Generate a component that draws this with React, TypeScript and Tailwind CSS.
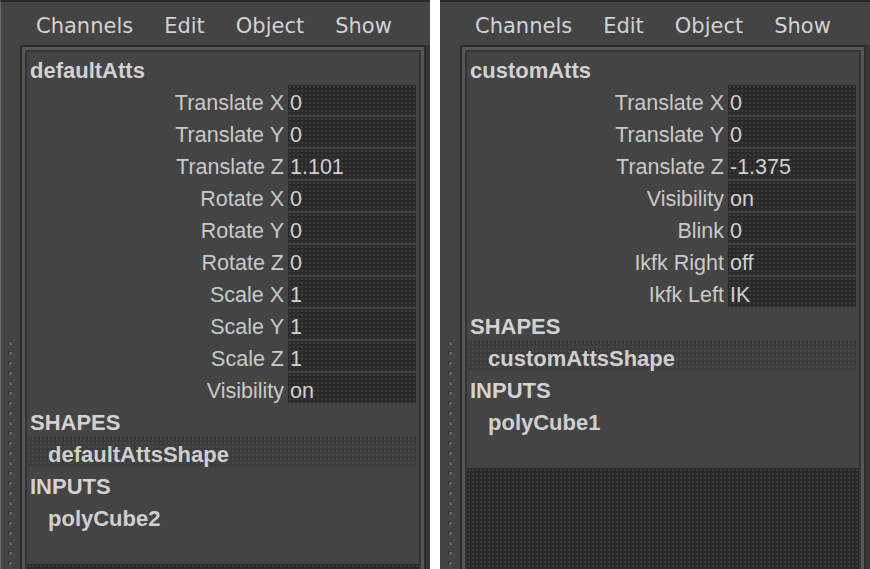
import React from 'react';

const sans = { fontFamily: '"Liberation Sans", Arial, sans-serif' };
const menuFont = { fontFamily: '"DejaVu Sans", "Liberation Sans", sans-serif' };

const dotsDark = 'bg-[#2a2a2a] bg-[radial-gradient(circle,#3a3a3a_0.8px,transparent_1px)] bg-[length:4px_4px]';
const dotsRow = 'bg-[#3d3d3d] bg-[radial-gradient(circle,#474747_0.8px,transparent_1px)] bg-[length:4px_4px]';

type PanelProps = {
    name: string;
    rows: [string, string][];
    shape: string;
    input: string;
    edge?: boolean;
};

const Grip = () => (
    <div className="w-[20px] flex flex-col items-start pl-[8px] pt-[296px] gap-[6px] overflow-hidden shrink-0">
        {Array.from({ length: 24 }).map((_, i) => (
            <div key={i} className="w-[4px] h-[4px] shrink-0 bg-[#5f5f5f] border-t border-l border-[#353535]" />
        ))}
    </div>
);

const Panel = ({ name, rows, shape, input, edge }: PanelProps) => {
    return (
        <div className={`w-[430px] h-full flex flex-col bg-[#444444] border-t-2 border-t-[#2b2b2b] overflow-hidden ${edge ? 'border-l border-l-[#6a6a6a]' : ''}`}>
            <div className="h-[43px] shrink-0 flex items-center pt-[6px] pl-[35px] gap-[31px] text-[21px] text-[#d2d2d2]" style={menuFont}>
                <span>Channels</span>
                <span>Edit</span>
                <span>Object</span>
                <span>Show</span>
            </div>

            <div className="flex flex-1 min-h-0">
                <div className={edge ? '-ml-px' : ''}>
                    <Grip />
                </div>

                <div className="w-[406px] shrink-0 flex flex-col border-t-2 border-x-2 border-[#2b2b2b]">
                    <div className="flex-1 flex flex-col border-t-[3px] border-x-[3px] border-[#565656]">
                        <div className="flex-1 flex flex-col border-t-2 border-x-2 border-[#343434] text-[21.5px] text-[#c9c9c9]" style={sans}>
                            <div className="h-[32px] shrink-0 pl-[3px] leading-[26px] pt-[6px] font-bold text-[22px] text-[#d2d2d2]">
                                {name}
                            </div>

                            {rows.map(([label, value]) => (
                                <div key={label} className="h-[32px] shrink-0 flex">
                                    <div className="w-[261px] pr-[4px] text-right leading-[26px] pt-[6px] whitespace-nowrap">
                                        {label}
                                    </div>
                                    <div className={`w-[128px] h-[30px] mt-px pl-[2px] leading-[26px] pt-[5px] text-[#d0d0d0] ${dotsDark}`}>
                                        {value}
                                    </div>
                                </div>
                            ))}

                            <div className="h-[32px] shrink-0 pl-[3px] leading-[26px] pt-[6px] font-bold text-[22px] text-[#d2d2d2]">
                                SHAPES
                            </div>
                            <div className="h-[32px] shrink-0 py-px">
                                <div className={`h-[30px] mr-[2px] pl-[21px] leading-[26px] pt-[5px] font-bold text-[22px] text-[#cfcfcf] ${dotsRow}`}>
                                    {shape}
                                </div>
                            </div>
                            <div className="h-[32px] shrink-0 pl-[3px] leading-[26px] pt-[6px] font-bold text-[22px] text-[#d2d2d2]">
                                INPUTS
                            </div>
                            <div className="h-[32px] shrink-0 pl-[21px] leading-[26px] pt-[6px] font-bold text-[22px] text-[#cfcfcf]">
                                {input}
                            </div>
                            <div className="h-[32px] shrink-0" />
                            <div className={`flex-1 ${dotsDark}`} />
                        </div>
                    </div>
                </div>

                <div className="w-[4px] shrink-0 bg-[#363636]" />
            </div>
        </div>
    );
};

const App = () => {
    return (
        <div className="w-[870px] h-[569px] bg-white flex gap-[10px] overflow-hidden">
            <Panel
                edge
                name="defaultAtts"
                rows={[
                    ['Translate X', '0'],
                    ['Translate Y', '0'],
                    ['Translate Z', '1.101'],
                    ['Rotate X', '0'],
                    ['Rotate Y', '0'],
                    ['Rotate Z', '0'],
                    ['Scale X', '1'],
                    ['Scale Y', '1'],
                    ['Scale Z', '1'],
                    ['Visibility', 'on'],
                ]}
                shape="defaultAttsShape"
                input="polyCube2"
            />
            <Panel
                name="customAtts"
                rows={[
                    ['Translate X', '0'],
                    ['Translate Y', '0'],
                    ['Translate Z', '-1.375'],
                    ['Visibility', 'on'],
                    ['Blink', '0'],
                    ['Ikfk Right', 'off'],
                    ['Ikfk Left', 'IK'],
                ]}
                shape="customAttsShape"
                input="polyCube1"
            />
        </div>
    );
};

export default App;
